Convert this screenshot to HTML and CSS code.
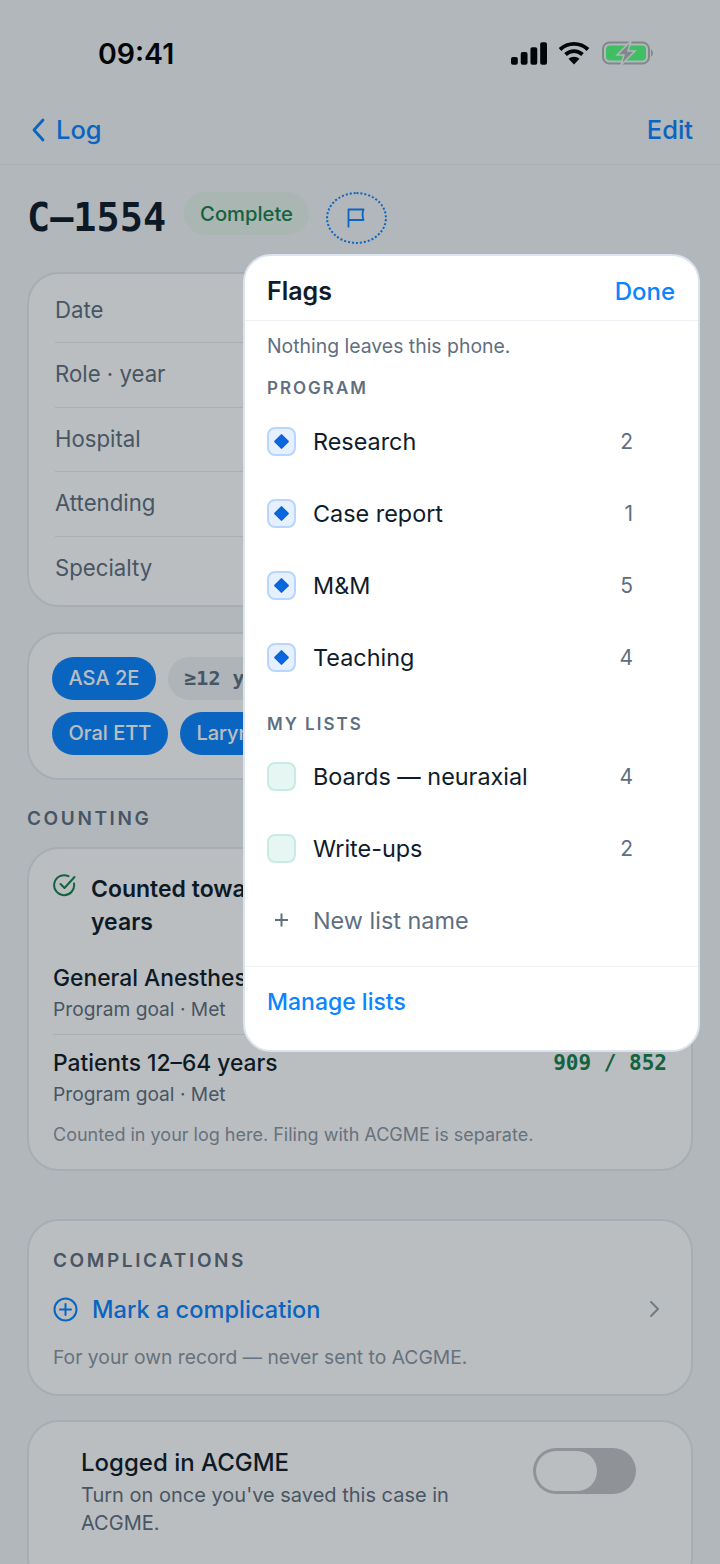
FILE: index.html
```html
<!DOCTYPE html>
<html lang="en">
<head>
	<meta charset="utf-8" />
	<title>C-1554</title>
	<link rel="stylesheet" href="styles.css">
</head>
<body>
	<div class="phone">
		<div class="status">
			<span class="time">09:41</span>
			<div class="status-icons">
				<svg width="36" height="23" viewBox="0 0 37 23"><rect x="0" y="15" width="7" height="8" rx="2"/><rect x="10" y="10" width="7" height="13" rx="2"/><rect x="20" y="5" width="7" height="18" rx="2"/><rect x="30" y="0" width="7" height="23" rx="2"/></svg>
				<svg class="wifi-icon" width="32" height="24" viewBox="0 0 32 24"><path d="M2 8.500C10 1 22 1 30 8.500" class="wifi"/><path d="M7.500 13.500C12.500 9 19.500 9 24.500 13.500" class="wifi"/><path d="M16 23.500L10.500 17.800C13.500 15 18.500 15 21.500 17.800Z"/></svg>
				<svg width="51" height="24" viewBox="0 0 51 24"><rect x="1" y="1.500" width="46" height="21" rx="6.500" fill="none" stroke="#aeb4b8" stroke-width="2"/><rect x="4" y="4.500" width="40" height="15" rx="4" fill="#54ff7e"/><path d="M49 8.500C51.500 9 51.500 15 49 15.500Z" fill="#aeb4b8"/><path d="M29 0L15 14H22L19 24L33 10H26Z" fill="#aeb4b8" stroke="#f3f6f8" stroke-width="1.500"/></svg>
			</div>
		</div>

		<div class="nav">
			<a class="nav-link nav-back">
				<svg width="14" height="24" viewBox="0 0 14 24"><path d="M12 2L3 12L12 22" fill="none" stroke="currentColor" stroke-width="2.800" stroke-linecap="round" stroke-linejoin="round"/></svg>
				Log
			</a>
			<a class="nav-link">Edit</a>
		</div>

		<div class="title-row">
			<h1>C–1554</h1>
			<span class="badge">Complete</span>
			<span class="flag-btn">
				<svg width="18" height="20" viewBox="0 0 18 20"><path d="M1.500 19.500V1.500H16.500C15.500 4 15.500 9 16.500 12H1.500" fill="none" stroke="currentColor" stroke-width="1.800" stroke-linejoin="round"/></svg>
			</span>
		</div>

		<div class="card details">
			<div class="detail">Date</div>
			<div class="detail">Role · year</div>
			<div class="detail">Hospital</div>
			<div class="detail">Attending</div>
			<div class="detail">Specialty</div>
		</div>

		<div class="card pills">
			<div class="pill-row">
				<span class="pill">ASA 2E</span>
				<span class="pill pill-grey">≥12 yrs</span>
			</div>
			<div class="pill-row">
				<span class="pill">Oral ETT</span>
				<span class="pill pill-long">Larynx</span>
			</div>
		</div>

		<h2 class="section">COUNTING</h2>

		<div class="card counting">
			<div class="count-head">
				<svg width="24" height="24" viewBox="0 0 24 24" fill="none" stroke="#17804e" stroke-width="2" stroke-linecap="round" stroke-linejoin="round"><path d="M21 10.500A10 10 0 1 1 15.500 3.200"/><path d="M7.500 11L11.500 15L21.500 4"/></svg>
				<div class="count-title">Counted toward<br>years</div>
			</div>
			<div class="goal">
				<div class="goal-line"><span class="goal-name">General Anesthesia</span></div>
				<div class="goal-sub">Program goal · Met</div>
			</div>
			<div class="goal goal-last">
				<div class="goal-line"><span class="goal-name">Patients 12–64 years</span><span class="goal-num">909 / 852</span></div>
				<div class="goal-sub">Program goal · Met</div>
			</div>
			<div class="count-note">Counted in your log here. Filing with ACGME is separate.</div>
		</div>

		<div class="card complications">
			<div class="comp-label">COMPLICATIONS</div>
			<div class="comp-row">
				<svg width="25" height="25" viewBox="0 0 25 25" fill="none" stroke="#0a84ff" stroke-width="2" stroke-linecap="round"><circle cx="12.500" cy="12.500" r="11"/><path d="M12.500 7V18M7 12.500H18"/></svg>
				<span class="comp-link">Mark a complication</span>
				<svg class="comp-arrow" width="11" height="18" viewBox="0 0 11 18"><path d="M2 2L9 9L2 16" fill="none" stroke="#9aa3ab" stroke-width="2" stroke-linecap="round" stroke-linejoin="round"/></svg>
			</div>
			<div class="comp-note">For your own record — never sent to ACGME.</div>
		</div>

		<div class="card logged">
			<div class="logged-text">
				<div class="logged-title">Logged in ACGME</div>
				<div class="logged-sub">Turn on once you've saved this case in ACGME.</div>
			</div>
			<span class="toggle"><span class="knob"></span></span>
		</div>

		<div class="scrim"></div>

		<div class="popover">
			<div class="pop-head">
				<span class="pop-title">Flags</span>
				<span class="pop-done">Done</span>
			</div>
			<div class="pop-body">
				<div class="pop-note">Nothing leaves this phone.</div>
				<div class="pop-label">PROGRAM</div>
				<div class="flag"><span class="box box-on"><i></i></span><span class="flag-name">Research</span><span class="flag-num">2</span></div>
				<div class="flag"><span class="box box-on"><i></i></span><span class="flag-name">Case report</span><span class="flag-num">1</span></div>
				<div class="flag"><span class="box box-on"><i></i></span><span class="flag-name">M&amp;M</span><span class="flag-num">5</span></div>
				<div class="flag"><span class="box box-on"><i></i></span><span class="flag-name">Teaching</span><span class="flag-num">4</span></div>
				<div class="pop-label pop-label-lists">MY LISTS</div>
				<div class="flag"><span class="box"></span><span class="flag-name">Boards — neuraxial</span><span class="flag-num">4</span></div>
				<div class="flag"><span class="box"></span><span class="flag-name">Write-ups</span><span class="flag-num">2</span></div>
				<div class="flag flag-new">
					<svg class="box-plus" width="29" height="16" viewBox="0 0 29 16"><path d="M14.500 1.500V14.500M8 8H21" fill="none" stroke="#5f6f80" stroke-width="2"/></svg>
					<span class="flag-name">New list name</span>
				</div>
			</div>
			<div class="pop-foot">Manage lists</div>
		</div>
	</div>
</body>
</html>
```

FILE: styles.css
```css
* {
	box-sizing: border-box;
}

body {
	margin: 0;
	font-family: Inter, "Noto Sans", sans-serif;
	color: #0f1c2a;
}

.phone {
	position: relative;
	width: 720px;
	height: 1564px;
	overflow: hidden;
	background-color: #f3f6f8;
}

.scrim {
	position: absolute;
	inset: 0;
	background-color: rgba(10, 20, 30, 0.28);
}

/* status bar */
.status {
	height: 100px;
	padding: 38px 67px 0 98px;
	display: flex;
	justify-content: space-between;
	color: #000;
}

.time {
	font-size: 28.500px;
	font-weight: 600;
	line-height: 32px;
}

.status-icons {
	display: flex;
	height: 24px;
	align-items: center;
	margin-top: 3px;
}

.wifi-icon {
	margin: 0 12px 0 11px;
}

.wifi {
	fill: none;
	stroke: #000;
	stroke-width: 3.800;
}

/* nav */
.nav {
	height: 65px;
	padding: 0 27px 5px 31px;
	display: flex;
	justify-content: space-between;
	align-items: center;
	border-bottom: 1px solid #e6e9ec;
}

.nav-link {
	font-size: 25.500px;
	font-weight: 500;
	color: #0a84ff;
	display: flex;
	align-items: center;
	gap: 11px;
}

.title-row {
	height: 107px;
	padding: 27px 0 0 27px;
	display: flex;
	align-items: flex-start;
}

h1 {
	margin: 0;
	font-family: "DejaVu Sans Mono", "Liberation Mono", monospace;
	font-size: 38.500px;
	font-weight: 700;
	line-height: 52px;
}

.badge {
	margin-left: 18px;
	height: 43px;
	padding: 0 16px;
	border-radius: 22px;
	background-color: #e6f4ec;
	color: #17804e;
	font-size: 20.200px;
	font-weight: 500;
	line-height: 43px;
}

.flag-btn {
	margin-left: 17px;
	width: 61px;
	height: 52px;
	border: 2px dotted #0a84ff;
	border-radius: 50%;
	color: #0a84ff;
	display: flex;
	align-items: center;
	justify-content: center;
}

/* cards */
.card {
	margin: 0 27px;
	background-color: #fff;
	border: 2px solid #e3e8ee;
	border-radius: 32px;
}

.details {
	height: 335px;
	padding: 5px 0 0 26px;
}

.detail {
	height: 64.400px;
	line-height: 62px;
	font-size: 22.200px;
	color: #5f6f80;
	border-bottom: 1px solid #e6e9ec;
}

.detail:last-child {
	border-bottom: none;
}

.pills {
	margin-top: 25px;
	height: 148px;
	padding: 23px;
	display: flex;
	flex-direction: column;
	gap: 12px;
}

.pill-row {
	display: flex;
	gap: 12px;
}

.pill {
	height: 43px;
	padding: 0 16.500px;
	border-radius: 22px;
	background-color: #0a84ff;
	color: #fff;
	font-size: 20px;
	font-weight: 500;
	line-height: 43px;
}

.pill-grey {
	background-color: #eef1f4;
	color: #5f6f80;
	font-family: "DejaVu Sans Mono", monospace;
	font-weight: 700;
}

.pill-long {
	padding-right: 90px;
}

.section {
	margin: 27px 0 17px 27px;
	font-size: 19px;
	font-weight: 600;
	letter-spacing: 2.600px;
	line-height: 23px;
	color: #5f6f80;
}

.counting {
	height: 324px;
	padding: 24px 24px 0 24px;
}

.count-head {
	display: flex;
	gap: 14px;
	align-items: flex-start;
}

.count-title {
	font-size: 23px;
	font-weight: 600;
	line-height: 33px;
}

.goal {
	margin-top: 23px;
	padding-bottom: 10px;
	border-bottom: 1px solid #e6e9ec;
}

.goal-last {
	border-bottom: none;
	margin-top: 12px;
	padding-bottom: 0;
}

.goal-line {
	display: flex;
	justify-content: space-between;
	line-height: 32px;
}

.goal-name {
	font-size: 22.800px;
	font-weight: 500;
}

.goal-num {
	font-family: "DejaVu Sans Mono", monospace;
	font-size: 21px;
	font-weight: 700;
	color: #17804e;
}

.goal-sub {
	font-size: 19.200px;
	color: #5f6f80;
	line-height: 30px;
}

.count-note {
	margin-top: 13px;
	font-size: 18px;
	color: #8a96a3;
	line-height: 26px;
}

.complications {
	margin-top: 48px;
	height: 177px;
	padding: 28px 24px 0 24px;
}

.comp-label {
	font-size: 19px;
	font-weight: 600;
	letter-spacing: 2.600px;
	line-height: 23px;
	color: #5f6f80;
}

.comp-row {
	margin-top: 21px;
	height: 32px;
	display: flex;
	align-items: center;
	gap: 14px;
}

.comp-link {
	font-size: 23.600px;
	font-weight: 500;
	color: #0a84ff;
	flex: 1;
}

.comp-arrow {
	margin-right: 7px;
}

.comp-note {
	margin-top: 19px;
	font-size: 19.300px;
	color: #8a96a3;
	line-height: 26px;
}

.logged {
	margin-top: 24px;
	height: 170px;
	padding: 23px 55px 0 52px;
	display: flex;
	justify-content: space-between;
	align-items: flex-start;
}

.logged-text {
	width: 400px;
}

.logged-title {
	font-size: 24px;
	font-weight: 500;
	line-height: 36px;
}

.logged-sub {
	font-size: 20px;
	line-height: 28px;
	color: #5f6f80;
}

.toggle {
	width: 103px;
	height: 46px;
	border-radius: 23px;
	background-color: #c2c4c7;
	padding: 3px;
	margin-top: 3px;
}

.knob {
	display: block;
	width: 61px;
	height: 40px;
	border-radius: 20px;
	background-color: #fff;
}

/* flags popover */
.popover {
	position: absolute;
	left: 243px;
	top: 254px;
	width: 457px;
	height: 798px;
	background-color: #fff;
	border: 2px solid #dbe4ee;
	border-radius: 28px;
	display: flex;
	flex-direction: column;
}

.pop-head {
	height: 65px;
	padding: 6px 23px 0 22px;
	display: flex;
	align-items: center;
	justify-content: space-between;
	border-bottom: 1px solid #eef2f6;
}

.pop-title {
	font-size: 25px;
	font-weight: 600;
}

.pop-done {
	font-size: 24px;
	font-weight: 500;
	color: #0a84ff;
}

.pop-body {
	padding: 0 22px;
	height: 646px;
	border-bottom: 1px solid #eef2f6;
}

.pop-note {
	margin-top: 12px;
	font-size: 19.400px;
	line-height: 26px;
	color: #5f6f80;
}

.pop-label {
	margin-top: 18px;
	margin-bottom: 6px;
	font-size: 17px;
	font-weight: 600;
	letter-spacing: 2px;
	line-height: 22px;
	color: #5f6f80;
}

.pop-label-lists {
	margin-top: 20px;
	margin-bottom: 5px;
}

.flag {
	height: 72px;
	display: flex;
	align-items: center;
	font-size: 23.400px;
}

.box {
	width: 29px;
	height: 29px;
	border-radius: 8px;
	border: 2px solid #c9ebe4;
	background-color: #e6f6f3;
	margin-right: 17px;
	display: flex;
	align-items: center;
	justify-content: center;
}

.box-on {
	border-color: #b8d6ff;
	background-color: #e6f0ff;
}

.box-on i {
	display: block;
	width: 11px;
	height: 11px;
	border-radius: 1px;
	background-color: #0a66dc;
	transform: rotate(45deg);
}

.box-plus {
	margin-right: 17px;
}

.flag-name {
	flex: 1;
}

.flag-num {
	font-size: 21px;
	color: #5f6f80;
	margin-right: 43px;
}

.flag-new .flag-name {
	color: #5f6f80;
}

.pop-foot {
	padding: 0 22px;
	margin-top: 20px;
	font-size: 23px;
	font-weight: 500;
	line-height: 30px;
	color: #0a84ff;
}
```
